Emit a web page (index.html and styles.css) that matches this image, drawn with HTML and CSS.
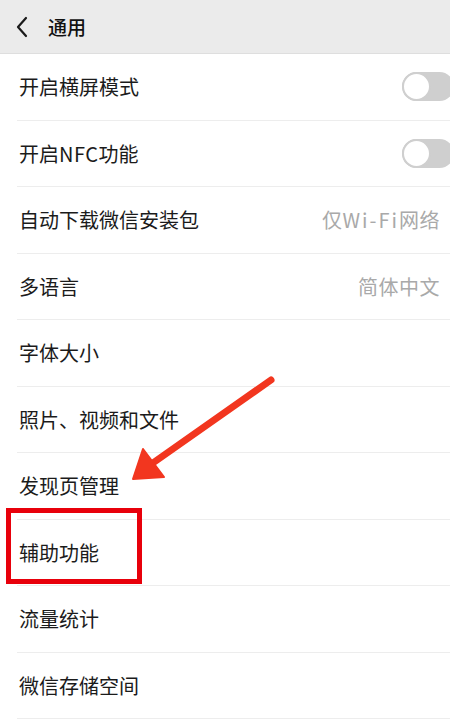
FILE: index.html
```html
<!DOCTYPE html>
<html lang="zh">
<head>
<meta charset="utf-8">
<title>通用</title>
<link rel="stylesheet" href="styles.css">
</head>
<body>
<div class="screen">
  <header class="topbar">
    <svg class="back" width="14" height="22" viewBox="0 0 14 22"><path d="M11 2 L3 11 L11 20" fill="none" stroke="#1a1a1a" stroke-width="2.2" stroke-linecap="round" stroke-linejoin="round"/></svg>
    <span class="title">通用</span>
  </header>
  <ul class="list">
    <li class="row"><span class="label">开启横屏模式</span><span class="switch"><span class="knob"></span></span></li>
    <li class="row"><span class="label">开启<span class="latin">NFC</span>功能</span><span class="switch"><span class="knob"></span></span></li>
    <li class="row"><span class="label">自动下载微信安装包</span><span class="value">仅<span class="latin wide">Wi-Fi</span>网络</span><span class="chev"></span></li>
    <li class="row"><span class="label">多语言</span><span class="value">简体中文</span><span class="chev"></span></li>
    <li class="row"><span class="label">字体大小</span><span class="chev"></span></li>
    <li class="row"><span class="label">照片、视频和文件</span><span class="chev"></span></li>
    <li class="row"><span class="label">发现页管理</span><span class="chev"></span></li>
    <li class="row"><span class="label">辅助功能</span><span class="chev"></span></li>
    <li class="row"><span class="label">流量统计</span><span class="chev"></span></li>
    <li class="row"><span class="label">微信存储空间</span><span class="chev"></span></li>
  </ul>
  <svg class="annot" width="450" height="720" viewBox="0 0 450 720">
    <line x1="271" y1="380" x2="150" y2="465" stroke="#f2361f" stroke-width="7" stroke-linecap="round"/>
    <polygon points="133,479 143,449 164,477" fill="#f2361f" stroke="#f2361f" stroke-width="2" stroke-linejoin="round"/>
    <rect x="8.5" y="510.5" width="131" height="71" fill="none" stroke="#e8000b" stroke-width="5"/>
  </svg>
</div>
</body>
</html>
```
FILE: styles.css
```css
* { box-sizing: border-box; }
html, body { margin: 0; padding: 0; }
body {
  width: 450px;
  height: 720px;
  overflow: hidden;
  background: #ffffff;
  font-family: "Noto Sans CJK SC", "Noto Sans", sans-serif;
  color: #1b1b1b;
}
.screen { position: relative; width: 450px; height: 720px; overflow: hidden; }
.topbar {
  height: 54px;
  background: #ebebeb;
  border-bottom: 1px solid #dedede;
  display: flex;
  align-items: center;
  padding-left: 15px;
}
.back { display: block; margin-right: 19px; }
.title { font-size: 19px; font-weight: 500; color: #111; }
.list { list-style: none; margin: 0; padding: 0; }
.row {
  height: 66.5px;
  margin-left: 17px;
  padding-left: 2px;
  border-bottom: 1px solid #ededed;
  display: flex;
  align-items: center;
  font-size: 20px;
}
.label { flex: 1; white-space: nowrap; }
.latin { letter-spacing: 0.5px; }
.value { color: #a9a9a9; font-size: 20px; margin-right: 9px; white-space: nowrap; letter-spacing: 0.5px; }
.wide { letter-spacing: 2px; }
.chev {
  width: 10px; height: 10px;
  border-top: 2px solid #c4c4c4;
  border-right: 2px solid #c4c4c4;
  transform: rotate(45deg);
  margin-right: -9px;
  flex: none;
}
.switch {
  flex: none;
  width: 52px; height: 29px;
  border-radius: 15px;
  background: #cfcfcf;
  margin-right: -4px;
  position: relative;
  display: flex;
  align-items: center;
}
.knob {
  width: 29px; height: 29px;
  border-radius: 50%;
  background: #fff;
  border: 2px solid #cfcfcf;
}
.annot { position: absolute; left: 0; top: 0; pointer-events: none; }
```
